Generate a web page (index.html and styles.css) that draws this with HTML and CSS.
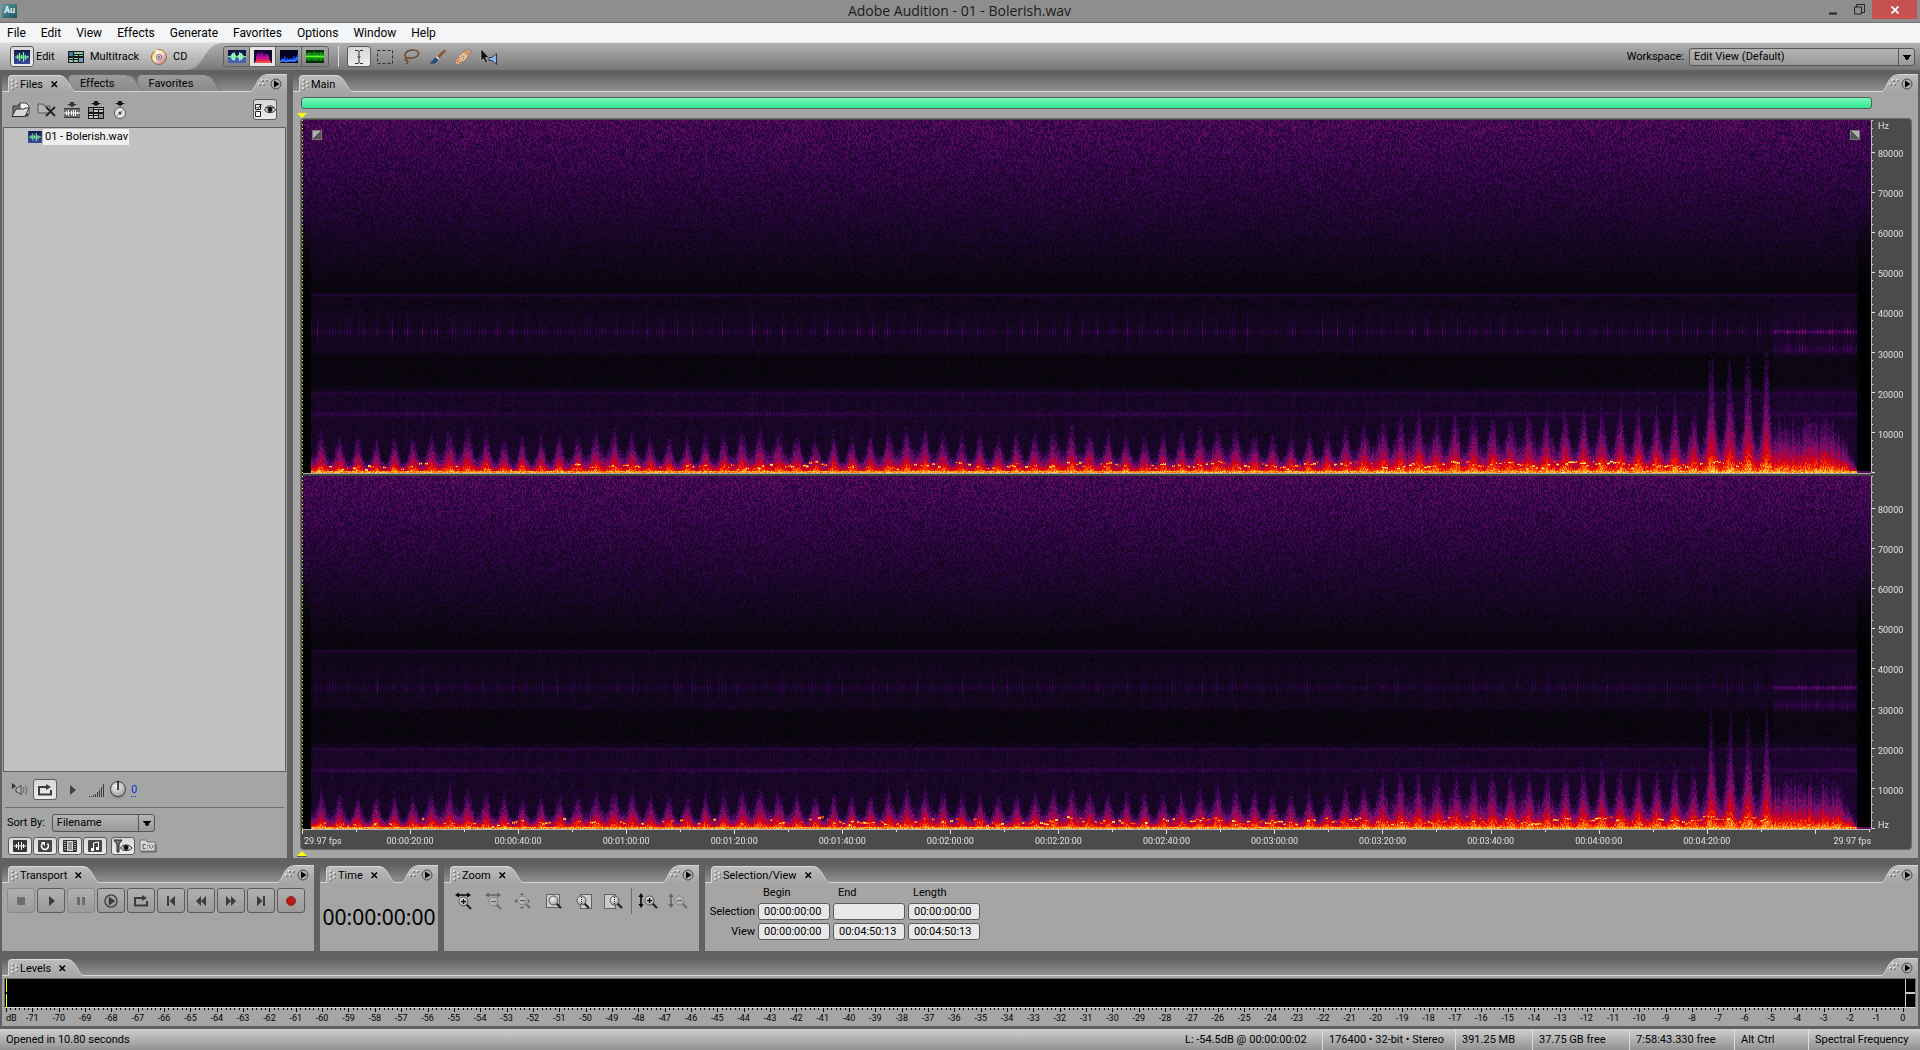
FILE: index.html
```
<!DOCTYPE html>
<html lang="en">
<head>
    <meta charset="UTF-8">
    <meta name="viewport" content="width=device-width, initial-scale=1.0">
    <title>Adobe Audition - 01 - Bolerish.wav</title>
    <link rel="stylesheet" href="styles.css">
</head>
<body>
    <!-- icon sprite -->
    <svg class="sprite" width="0" height="0" aria-hidden="true">
        <defs>
            <linearGradient id="g-tab" x1="0" y1="0" x2="0" y2="1">
                <stop offset="0" stop-color="#bcbcbc"/>
                <stop offset="1" stop-color="#a5a5a5"/>
            </linearGradient>
            <linearGradient id="g-tab-off" x1="0" y1="0" x2="0" y2="1">
                <stop offset="0" stop-color="#9b9b9b"/>
                <stop offset="1" stop-color="#8a8a8a"/>
            </linearGradient>
            <linearGradient id="g-modes" x1="0" y1="0" x2="0" y2="1">
                <stop offset="0" stop-color="#dadada"/>
                <stop offset="1" stop-color="#a0a0a0"/>
            </linearGradient>
            <linearGradient id="g-navy" x1="0" y1="0" x2="0" y2="1">
                <stop offset="0" stop-color="#151a4c"/>
                <stop offset="1" stop-color="#3a4a9c"/>
            </linearGradient>
            <linearGradient id="g-flame" x1="0" y1="0" x2="0" y2="1">
                <stop offset="0" stop-color="#3a0a8a"/>
                <stop offset=".6" stop-color="#c0109a"/>
                <stop offset="1" stop-color="#ff3020"/>
            </linearGradient>
            <linearGradient id="g-cd" x1="0" y1="0" x2="1" y2="1">
                <stop offset="0" stop-color="#f2a23a"/>
                <stop offset=".4" stop-color="#fff2c0"/>
                <stop offset=".6" stop-color="#e8b8d8"/>
                <stop offset="1" stop-color="#b07a30"/>
            </linearGradient>
            <radialGradient id="g-lens" cx=".4" cy=".35" r=".7">
                <stop offset="0" stop-color="#f4f4f4"/>
                <stop offset="1" stop-color="#9c9c9c"/>
            </radialGradient>
        </defs>
        <symbol id="tab-end" viewBox="0 0 18 17">
            <path d="M0 0C6 0 8 4 11 9C14 14 15 16 18 17H0Z" fill="url(#g-tab)"/>
            <path d="M0 .5C6 .5 8 4 11 9C14 14 15 16.500 18 16.500" fill="none" stroke="#d6d6d6"/>
        </symbol>
        <symbol id="tab-end-off" viewBox="0 0 18 17">
            <path d="M0 0C6 0 8 4 11 9C14 14 15 16 18 17H0Z" fill="url(#g-tab-off)"/>
            <path d="M0 .5C6 .5 8 4.500 11 9.500C14 14 15 16 18 16.500" fill="none" stroke="#6c6c6c"/>
            <path d="M0 16.500H18" stroke="#d6d6d6"/>
        </symbol>
        <symbol id="menu-end" viewBox="0 0 36 18">
            <path d="M0 18C5 16 5 1 17 1H36V18Z" fill="url(#g-tab)"/>
            <path d="M0 17.500C5 16 5 .5 17 .5H36" fill="none" stroke="#d6d6d6"/>
            <path d="M7 9h2v2h-2zM11 9h2v2h-2zM10 5h2v2h-2zM14 5h2v2h-2z" fill="#e4e4e4"/>
            <path d="M8 10h2v2h-2zM12 10h2v2h-2zM11 6h2v2h-2zM15 6h2v2h-2z" fill="#858585"/>
            <circle cx="25" cy="10" r="5" fill="#adadad" stroke="#4c4c4c"/>
            <path d="M23 6.500L28.500 10L23 13.500Z" fill="#000"/>
        </symbol>
        <symbol id="grip" viewBox="0 0 8 12">
            <path d="M1 1h2v2h-2zM1 5h2v2h-2zM1 9h2v2h-2zM5 3h2v2h-2zM5 7h2v2h-2z" fill="#808080"/>
            <path d="M0 0h2v2h-2zM0 4h2v2h-2zM0 8h2v2h-2zM4 2h2v2h-2zM4 6h2v2h-2z" fill="#d8d8d8"/>
        </symbol>
        <symbol id="modes-end" viewBox="0 0 36 27">
            <path d="M0 0H36C23 1 20 10 14 18C10 24 7 26 0 27Z" fill="url(#g-modes)"/>
        </symbol>
        <symbol id="wave" viewBox="0 0 16 14">
            <rect width="16" height="14" fill="url(#g-navy)"/>
            <path d="M1 7h14" stroke="#6fe08c"/>
            <path d="M3.500 5v4M5.500 3v8M7.500 5v4M9.500 2v10M11.500 5v5M13.500 6v2" stroke="#7df09a" stroke-width="1.300"/>
        </symbol>
        <symbol id="wave2" viewBox="0 0 18 13">
            <rect width="18" height="13" fill="#11154a"/>
            <rect y="7" width="18" height="6" fill="#4a5fb0"/>
            <path d="M0 6.500h18" stroke="#7df0a0"/>
            <path d="M1.500 6.500L5.500 2.500L9 6.500L12.500 2.500L16.500 6.500L12.500 10.500L9 6.500L5.500 10.500Z" fill="#7df0a0"/>
            <path d="M4.500 3v7M6.500 2v9M11.500 2v9M13.500 3v7" stroke="#b8ffd0" stroke-opacity=".7"/>
        </symbol>
        <symbol id="spectral" viewBox="0 0 18 13">
            <rect width="18" height="13" fill="#10062c"/>
            <path d="M2 12V6L4 2L6 4L7 1L9 3L10 6L12 3L15 6L16 12Z" fill="url(#g-flame)"/>
            <path d="M1 12h16" stroke="#ff4a50" stroke-width="2"/>
        </symbol>
        <symbol id="pan" viewBox="0 0 18 13">
            <rect width="18" height="13" fill="#020420"/>
            <path d="M0 11l2-3 2 1V5l2 4 2-1 1 2 2-2 2 1V5l2 3 3-4v6l-2 2H0Z" fill="#1848e8"/>
            <path d="M0 12l3-2 3 2 4-2 4 1 4-3" fill="none" stroke="#4aa8ff"/>
        </symbol>
        <symbol id="phase" viewBox="0 0 18 13">
            <rect width="18" height="13" fill="#032a05"/>
            <path d="M0 4h18M0 9h18" stroke="#0b7a12" stroke-width="3"/>
            <path d="M0 6.500h18" stroke="#5cff2a" stroke-width="2"/>
            <path d="M3 2v9M8 1v10M11 3v8M15 2v9" stroke="#2bd01e" stroke-opacity=".6"/>
        </symbol>
        <symbol id="multi" viewBox="0 0 16 12">
            <rect width="16" height="12" fill="#15181c"/>
            <path d="M1 1h4v4h-4z" fill="#4a7aa8"/>
            <path d="M11 7h4v4h-4z" fill="#78a0c8"/>
            <path d="M6 1h9v2h-9zM6 4h4v1h-4zM11 4h4v1h-4zM1 7h4v1h-4zM1 9h4v2h-4zM6 7h4v1h-4zM6 9h4v2h-4z" fill="#8ec8a0"/>
        </symbol>
        <symbol id="cd" viewBox="0 0 16 16">
            <circle cx="8" cy="8" r="7.500" fill="url(#g-cd)" stroke="#9a6a30"/>
            <path d="M8 8L3 1.500A8 8 0 0 1 8 .5Z" fill="#fff" opacity=".7"/>
            <circle cx="8" cy="8" r="2.500" fill="#e8e0e8" stroke="#806070"/>
            <circle cx="8" cy="8" r="1" fill="#666"/>
        </symbol>
        <symbol id="ibeam" viewBox="0 0 12 16">
            <path d="M2 1.500h3l1 1 1-1h3M6 2.500v11M2 14.500h3l1-1 1 1h3M4.500 8h3" fill="none" stroke="#303030"/>
        </symbol>
        <symbol id="marquee" viewBox="0 0 16 14">
            <rect x=".5" y=".5" width="15" height="13" fill="none" stroke="#26303a" stroke-dasharray="3 2"/>
        </symbol>
        <symbol id="lasso" viewBox="0 0 18 16">
            <path d="M5 9C2 8 2 4 6 2C10 0 16 1 16.500 4C17 8 10 10 5.500 9C3 8.500 2.500 11 5 11.500C7 12 5 14 4 15" fill="none" stroke="#6a4a2c" stroke-width="1.500"/>
        </symbol>
        <symbol id="brush" viewBox="0 0 17 16">
            <path d="M15.500 0.500L8 7.500L10 9.500L17 2Z" fill="#8a5030"/>
            <path d="M8 7L10.500 9.500L9 11L6.500 8.500Z" fill="#d8d8d8"/>
            <path d="M7 8.500C4 9 4 13 0 14C4 15.500 9 14.500 9 10.500Z" fill="#284c78"/>
        </symbol>
        <symbol id="heal" viewBox="0 0 18 18">
            <g transform="rotate(-45 9 9)">
                <rect x="-1" y="6" width="20" height="6" rx="3" fill="#d8a880" stroke="#9a6a48" stroke-width=".7"/>
                <rect x="6" y="6" width="6" height="6" fill="#ecc8a4"/>
                <path d="M2 8h1M2 10.500h1M7.500 8h1M9.500 9h1M7.500 10.500h1M15 8h1M15 10.500h1" stroke="#7a4a2c"/>
            </g>
        </symbol>
        <symbol id="scrub" viewBox="0 0 18 16">
            <path d="M1 0L9 8.500L5.500 8.500L7.500 13L5.500 14L3.500 9.500L1 12Z" fill="#111" stroke="#d0d0d0" stroke-width=".5"/>
            <path d="M9 8.500h3l4.500-4v11L12 11.500H9Z" fill="#8fb8dc" stroke="#1f3a58"/>
        </symbol>
        <symbol id="folder-open" viewBox="0 0 20 16">
            <path d="M2 14V4h5l1-2h3v3h6v9Z" fill="#787878" stroke="#303030"/>
            <path d="M9 1h6l3 3v8h-9Z" fill="#f4f4f4" stroke="#404040"/>
            <path d="M1 14.500L5 7h8l1-1h4l-4 8.500Z" fill="#d8d8d8" stroke="#303030"/>
        </symbol>
        <symbol id="folder-close" viewBox="0 0 20 16">
            <path d="M1 11V2h5l1 2h6v7Z" fill="#b4b4b4" stroke="#5a5a5a"/>
            <path d="M9 5L18 14M18 5L9 14" stroke="#222" stroke-width="1.800"/>
        </symbol>
        <symbol id="ins-wave" viewBox="0 0 18 18">
            <path d="M7 1h4v2h3L9 6L4 3h3Z" fill="#333"/>
            <rect x="1" y="7" width="16" height="10" fill="#6a6a6a"/>
            <path d="M1 7.500h16M1 16.500h16" stroke="#3a3a3a"/>
            <path d="M1 12h16M3.500 10v4M5.500 9v6M8.500 10v4M10.500 9v6M12.500 9v6M14.500 11v2" stroke="#fff"/>
        </symbol>
        <symbol id="ins-multi" viewBox="0 0 18 18">
            <path d="M7 0h4v2h3L9 5L4 2h3Z" fill="#111"/>
            <rect x="1" y="6" width="16" height="12" fill="#151515"/>
            <path d="M2 7h4v4h-4zM12 13h4v4h-4z" fill="#8c8c8c"/>
            <path d="M7 7h9v1h-9zM7 9h4v2h-4zM12 9h4v2h-4zM2 13h4v1h-4zM2 15h4v2h-4zM7 13h4v1h-4zM7 15h4v2h-4z" fill="#c8c8c8"/>
        </symbol>
        <symbol id="ins-cd" viewBox="0 0 18 18">
            <path d="M7 0h4v2h3L9 5L4 2h3Z" fill="#111"/>
            <circle cx="9" cy="12" r="5.500" fill="#e4e4e4" stroke="#555"/>
            <path d="M9 12L13 8M9 12L5 16" stroke="#888"/>
            <circle cx="9" cy="12" r="1.500" fill="#444"/>
        </symbol>
        <symbol id="eye" viewBox="0 0 12 9">
            <path d="M.5 5C3 1 9 1 11.500 5C9 8.500 3 8.500 .5 5Z" fill="#eee" stroke="#222"/>
            <circle cx="6" cy="4.500" r="2.500" fill="#111"/>
            <path d="M1 3C4 0 8 0 11 3" fill="none" stroke="#555"/>
        </symbol>
        <symbol id="checks" viewBox="0 0 8 14">
            <path d="M1.500 1.500h5v5h-5zM1.500 8.500h5v5h-5z" fill="#fff" stroke="#222"/>
            <path d="M2.500 4l1.500 1.500L7.500 1" fill="none" stroke="#000"/>
        </symbol>
        <symbol id="autoplay" viewBox="0 0 18 14">
            <path d="M1 0v6l4-3Z" fill="#333"/>
            <path d="M5 5h2l3-3v10L7 9H5Z" fill="#b8b8b8" stroke="#444"/>
            <path d="M12 4q2 3 0 6M14.500 2.500q3 4.500 0 9" fill="none" stroke="#666"/>
        </symbol>
        <symbol id="loop" viewBox="0 0 16 12">
            <path d="M4 3H2V10.500H14V6" fill="none" stroke="#3c3c3c" stroke-width="2"/>
            <path d="M4 3h6" stroke="#3c3c3c" stroke-width="2"/>
            <path d="M9 0L14 3L9 6Z" fill="#3c3c3c"/>
        </symbol>
        <symbol id="play" viewBox="0 0 6 10"><path d="M0 0L6 5L0 10Z" fill="#404040"/></symbol>
        <symbol id="volume" viewBox="0 0 16 14">
            <path d="M.5 13v1M2.500 13v1M4.500 12v2M6.500 11v3M8.500 9v5M10.500 7v7M12.500 4v10M14.500 1v13" stroke="#3c3c3c"/>
        </symbol>
        <symbol id="knob" viewBox="0 0 18 20">
            <circle cx="9" cy="11" r="8" fill="#777" opacity=".5"/>
            <circle cx="9" cy="9" r="7.500" fill="url(#g-lens)" stroke="#444"/>
            <path d="M9 1v9" stroke="#111" stroke-width="1.500"/>
        </symbol>
        <symbol id="f-wave" viewBox="0 0 14 12">
            <rect width="14" height="12" rx="1" fill="#333"/>
            <path d="M1 6h12M3.500 4v4M5.500 2v8M8.500 2v8M10.500 4v4" stroke="#fff"/>
        </symbol>
        <symbol id="f-loop" viewBox="0 0 14 12">
            <rect width="14" height="12" rx="1" fill="#444"/>
            <path d="M5 3A3.500 3.500 0 1 0 9.500 3.500" fill="none" stroke="#fff" stroke-width="1.500"/>
            <path d="M3 2h4v4Z" fill="#fff"/>
        </symbol>
        <symbol id="f-video" viewBox="0 0 14 12">
            <rect width="14" height="12" rx="1" fill="#333"/>
            <rect x="4.500" y="1.500" width="5" height="9" fill="#999" stroke="#ddd"/>
            <path d="M2 1v10M12 1v10" stroke="#fff" stroke-dasharray="1 1"/>
        </symbol>
        <symbol id="f-midi" viewBox="0 0 14 12">
            <rect width="14" height="12" rx="1" fill="#444"/>
            <path d="M5.500 9V3L10.500 2V8" fill="none" stroke="#fff"/>
            <path d="M3 8h3v3h-3zM8 7h3v3h-3z" fill="#fff"/>
        </symbol>
        <symbol id="f-filter" viewBox="0 0 20 15">
            <path d="M1 1h8L6 5v8H4V5Z" fill="#777" stroke="#222"/>
            <path d="M7.500 9C10 5 16 5 19 9C16 12.500 10 12.500 7.500 9Z" fill="#ddd" stroke="#222"/>
            <circle cx="13" cy="8.500" r="2.500" fill="#111"/>
        </symbol>
        <symbol id="f-path" viewBox="0 0 18 14">
            <path d="M1 12V1h6l1 2h8v9Z" fill="#d8d8d8" stroke="#777"/>
            <path d="M2 13h15V5" fill="none" stroke="#555"/>
            <path d="M6.500 5.500h-2.500v4h2.500M8.500 6v1M8.500 8.500v1M10 5.500l1.500 4M12.500 5.500l2 2-2 2" fill="none" stroke="#555"/>
        </symbol>
        <symbol id="t-stop" viewBox="0 0 16 12"><path d="M4 2h8v8H4Z" fill="#6c6c6c"/></symbol>
        <symbol id="t-play" viewBox="0 0 16 12"><path d="M6 1L12 6L6 11Z" fill="#3c3c3c"/></symbol>
        <symbol id="t-pause" viewBox="0 0 16 12"><path d="M4 2h3v8H4ZM9 2h3v8H9Z" fill="#6c6c6c"/></symbol>
        <symbol id="t-playend" viewBox="0 0 16 12">
            <circle cx="8" cy="6" r="5.400" fill="none" stroke="#3c3c3c" stroke-width="1.200"/>
            <path d="M6 2L12 6L6 10Z" fill="#3c3c3c"/>
        </symbol>
        <symbol id="t-start" viewBox="0 0 16 12"><path d="M4 1h2v10H4ZM12 1v10L6.500 6Z" fill="#3c3c3c"/></symbol>
        <symbol id="t-rew" viewBox="0 0 16 12"><path d="M8 1v10L3 6ZM13 1v10L8 6Z" fill="#3c3c3c"/></symbol>
        <symbol id="t-ff" viewBox="0 0 16 12"><path d="M3 1L8 6L3 11ZM8 1L13 6L8 11Z" fill="#3c3c3c"/></symbol>
        <symbol id="t-end" viewBox="0 0 16 12"><path d="M4 1L9.500 6L4 11ZM10 1h2v10h-2Z" fill="#3c3c3c"/></symbol>
        <symbol id="t-rec" viewBox="0 0 16 12"><circle cx="8" cy="6" r="4.500" fill="#c01818" stroke="#7c3030"/></symbol>
        <symbol id="lens" viewBox="0 0 14 14">
            <path d="M8.500 8.500L13 13" stroke="#222" stroke-width="2.200"/>
            <circle cx="5.500" cy="5.500" r="4.500" fill="url(#g-lens)" stroke="#555"/>
        </symbol>
        <symbol id="z-in-h" viewBox="0 0 20 18">
            <path d="M3 3h12" stroke="#000" stroke-width="1.500"/><path d="M1 3l4-2.500v5ZM17 3l-4-2.500v5Z" fill="#000"/>
            <use href="#lens" x="4" y="4" width="14" height="14"/>
            <path d="M7 9.500h5M9.500 7v5" stroke="#000" stroke-width="1.300"/>
        </symbol>
        <symbol id="z-out-h" viewBox="0 0 20 18">
            <path d="M3 3h12" stroke="#000" stroke-width="1.500"/><path d="M1 3l4-2.500v5ZM17 3l-4-2.500v5Z" fill="#000"/>
            <use href="#lens" x="4" y="4" width="14" height="14"/>
            <path d="M7 9.500h5" stroke="#000" stroke-width="1.300"/>
        </symbol>
        <symbol id="z-full" viewBox="0 0 20 18">
            <path d="M0 9l3-2v4ZM16 9l-2-2v4ZM8 1l2 2h-4ZM8 17l2-2h-4Z" fill="#000"/>
            <use href="#lens" x="3" y="3" width="14" height="14"/>
            <path d="M6 8.500h5" stroke="#000" stroke-width="1.300"/>
        </symbol>
        <symbol id="z-sel" viewBox="0 0 20 18">
            <rect x="2.500" y="2.500" width="13" height="13" fill="#ccc" stroke="#111" stroke-dasharray="1 1"/>
            <use href="#lens" x="4" y="3" width="14" height="14"/>
        </symbol>
        <symbol id="z-left" viewBox="0 0 20 18">
            <rect x="6.500" y="2.500" width="11" height="14" fill="#ccc" stroke="#111" stroke-dasharray="1 1"/>
            <use href="#lens" x="2" y="3" width="14" height="14"/>
            <path d="M7.500 5v7" stroke="#111" stroke-dasharray="1 1"/>
        </symbol>
        <symbol id="z-right" viewBox="0 0 20 18">
            <rect x=".5" y="2.500" width="11" height="14" fill="#ccc" stroke="#111" stroke-dasharray="1 1"/>
            <use href="#lens" x="5" y="3" width="14" height="14"/>
            <path d="M10.500 5v7" stroke="#111" stroke-dasharray="1 1"/>
        </symbol>
        <symbol id="z-in-v" viewBox="0 0 20 18">
            <path d="M3 3v11" stroke="#000" stroke-width="1.500"/><path d="M3 1l-2.500 4h5ZM3 16l-2.500-4h5Z" fill="#000"/>
            <use href="#lens" x="6" y="3" width="14" height="14"/>
            <path d="M9 8.500h5M11.500 6v5" stroke="#000" stroke-width="1.300"/>
        </symbol>
        <symbol id="z-out-v" viewBox="0 0 20 18">
            <path d="M3 3v11" stroke="#000" stroke-width="1.500"/><path d="M3 1l-2.500 4h5ZM3 16l-2.500-4h5Z" fill="#000"/>
            <use href="#lens" x="6" y="3" width="14" height="14"/>
            <path d="M9 8.500h5" stroke="#000" stroke-width="1.300"/>
        </symbol>
        <symbol id="x" viewBox="0 0 7 7"><path d="M.5 .5L6 6M6 .5L.5 6" stroke="#000" stroke-width="1.500"/></symbol>
    </svg>

    <header class="titlebar">
        <span class="app-icon">Au</span>
        <h1>Adobe Audition - 01 - Bolerish.wav</h1>
        <div class="window-buttons">
            <button aria-label="Minimize"><svg width="9" height="10"><path d="M0 8.500h8" stroke="#222" stroke-width="2"/></svg></button>
            <button aria-label="Restore"><svg width="11" height="11"><path d="M.5 3h7v7h-7zM2.500 3V.5h8v8H8" fill="none" stroke="#222"/></svg></button>
            <button class="close" aria-label="Close"><svg width="8" height="8"><path d="M.5 .5l7 7M7.500 .5l-7 7" stroke="#fff" stroke-width="1.700"/></svg></button>
        </div>
    </header>

    <nav class="menubar">
        <a href="#">File</a>
        <a href="#">Edit</a>
        <a href="#">View</a>
        <a href="#">Effects</a>
        <a href="#">Generate</a>
        <a href="#">Favorites</a>
        <a href="#">Options</a>
        <a href="#">Window</a>
        <a href="#">Help</a>
    </nav>

    <div class="toolbar">
        <div class="modes">
            <button class="tool on" aria-label="Edit view"><svg width="16" height="14"><use href="#wave"/></svg></button>
            <span class="mode-name">Edit</span>
            <button class="mode multi"><svg width="16" height="12"><use href="#multi"/></svg>Multitrack</button>
            <button class="mode"><svg width="16" height="16"><use href="#cd"/></svg>CD</button>
        </div>
        <svg class="modes-end" width="36" height="27"><use href="#modes-end"/></svg>
        <div class="views">
            <button aria-label="Waveform"><svg width="18" height="13"><use href="#wave2"/></svg></button>
            <button class="on" aria-label="Spectral frequency"><svg width="18" height="13"><use href="#spectral"/></svg></button>
            <button aria-label="Spectral pan"><svg width="18" height="13"><use href="#pan"/></svg></button>
            <button aria-label="Spectral phase"><svg width="18" height="13"><use href="#phase"/></svg></button>
        </div>
        <div class="tools">
            <button class="tool on" aria-label="Time selection"><svg width="12" height="16"><use href="#ibeam"/></svg></button>
            <button class="tool" aria-label="Marquee"><svg width="16" height="14"><use href="#marquee"/></svg></button>
            <button class="tool" aria-label="Lasso"><svg width="18" height="16"><use href="#lasso"/></svg></button>
            <button class="tool" aria-label="Brush"><svg width="17" height="16"><use href="#brush"/></svg></button>
            <button class="tool" aria-label="Spot healing"><svg width="18" height="18"><use href="#heal"/></svg></button>
            <button class="tool" aria-label="Scrub"><svg width="18" height="16"><use href="#scrub"/></svg></button>
        </div>
        <label class="workspace" for="workspace">Workspace:</label>
        <select id="workspace" class="drop workspace-drop"><option>Edit View (Default)</option></select>
    </div>

    <main class="dock">
        <section class="panel files">
            <div class="strip">
                <div class="tab"><svg width="8" height="12"><use href="#grip"/></svg><span>Files</span><button class="tab-x" aria-label="Close Files"><svg width="7" height="7"><use href="#x"/></svg></button></div>
                <svg class="tab-end" width="18" height="17"><use href="#tab-end"/></svg>
                <div class="tab off">Effects</div>
                <svg class="tab-end" width="18" height="17"><use href="#tab-end-off"/></svg>
                <div class="tab off">Favorites</div>
                <svg class="tab-end" width="18" height="17"><use href="#tab-end-off"/></svg>
                <div class="strip-fill"></div>
                <button class="panel-menu" aria-label="Panel menu"><svg width="36" height="18"><use href="#menu-end"/></svg></button>
            </div>
            <div class="file-tools">
                <button aria-label="Import file"><svg width="20" height="16"><use href="#folder-open"/></svg></button>
                <button aria-label="Close file"><svg width="20" height="16"><use href="#folder-close"/></svg></button>
                <button aria-label="Edit file"><svg width="18" height="18"><use href="#ins-wave"/></svg></button>
                <button aria-label="Insert into multitrack"><svg width="18" height="18"><use href="#ins-multi"/></svg></button>
                <button aria-label="Insert into CD"><svg width="18" height="18"><use href="#ins-cd"/></svg></button>
                <button class="tool on options" aria-label="Show options"><svg width="8" height="14"><use href="#checks"/></svg><svg width="12" height="9"><use href="#eye"/></svg></button>
            </div>
            <ul class="file-list">
                <li><svg width="14" height="12"><use href="#wave"/></svg><span>01 - Bolerish.wav</span></li>
            </ul>
            <div class="preview">
                <button aria-label="Auto-play"><svg width="18" height="14"><use href="#autoplay"/></svg></button>
                <button class="tool on" aria-label="Loop"><svg width="16" height="12"><use href="#loop"/></svg></button>
                <button class="preview-play" aria-label="Play"><svg width="6" height="10"><use href="#play"/></svg></button>
                <svg width="16" height="14"><use href="#volume"/></svg>
                <svg width="18" height="20"><use href="#knob"/></svg>
                <a class="level" href="#">0</a>
            </div>
            <div class="sort">
                <label for="sort">Sort By:</label>
                <select id="sort" class="drop"><option>Filename</option></select>
            </div>
            <div class="filters">
                <button class="tool on" aria-label="Show audio"><svg width="14" height="12"><use href="#f-wave"/></svg></button>
                <button class="tool on" aria-label="Show loops"><svg width="14" height="12"><use href="#f-loop"/></svg></button>
                <button class="tool on" aria-label="Show video"><svg width="14" height="12"><use href="#f-video"/></svg></button>
                <button class="tool on" aria-label="Show MIDI"><svg width="14" height="12"><use href="#f-midi"/></svg></button>
                <button class="tool on filter" aria-label="Show markers"><svg width="20" height="15"><use href="#f-filter"/></svg></button>
                <button class="tool" aria-label="Full paths"><svg width="18" height="14"><use href="#f-path"/></svg></button>
            </div>
        </section>

        <section class="panel main-view">
            <div class="strip">
                <div class="tab"><svg width="8" height="12"><use href="#grip"/></svg><span>Main</span></div>
                <svg class="tab-end" width="18" height="17"><use href="#tab-end"/></svg>
                <div class="strip-fill"></div>
                <button class="panel-menu" aria-label="Panel menu"><svg width="36" height="18"><use href="#menu-end"/></svg></button>
            </div>
            <div class="main-body">
                <div class="range"><div class="range-bar"></div></div>
                <div class="display">
                    <div class="channel">
                        <canvas class="spectro" data-seed="7" data-gain="1"></canvas>
                        <span class="corner left"></span>
                        <span class="corner right"></span>
                    </div>
                    <div class="hz">
                        <canvas class="ticks" data-kind="hz"></canvas>
                        <ol class="hz-labels">
                            <li class="top">Hz</li>
                            <li>80000</li><li>70000</li><li>60000</li><li>50000</li>
                            <li>40000</li><li>30000</li><li>20000</li><li>10000</li>
                            <li class="bottom"></li>
                        </ol>
                    </div>
                    <div class="split"></div>
                    <div class="split-hz"></div>
                    <div class="channel">
                        <canvas class="spectro" data-seed="41" data-gain="0.7"></canvas>
                    </div>
                    <div class="hz">
                        <canvas class="ticks" data-kind="hz"></canvas>
                        <ol class="hz-labels">
                            <li class="top"></li>
                            <li>80000</li><li>70000</li><li>60000</li><li>50000</li>
                            <li>40000</li><li>30000</li><li>20000</li><li>10000</li>
                            <li class="bottom">Hz</li>
                        </ol>
                    </div>
                    <div class="time-ruler">
                        <canvas class="ticks" data-kind="time"></canvas>
                        <ol class="time-labels">
                            <li class="first">29.97 fps</li>
                            <li>00:00:20:00</li><li>00:00:40:00</li><li>00:01:00:00</li>
                            <li>00:01:20:00</li><li>00:01:40:00</li><li>00:02:00:00</li>
                            <li>00:02:20:00</li><li>00:02:40:00</li><li>00:03:00:00</li>
                            <li>00:03:20:00</li><li>00:03:40:00</li><li>00:04:00:00</li>
                            <li>00:04:20:00</li>
                            <li class="last">29.97 fps</li>
                        </ol>
                    </div>
                    <svg class="marker start" width="10" height="6"><path d="M0 0h10L5 5Z" fill="#ff0"/></svg>
                    <svg class="marker end" width="10" height="6"><path d="M0 5h10L5 0Z" fill="#ff0"/><path d="M0 5.500h10" stroke="#555"/></svg>
                    <div class="playhead"></div>
                </div>
            </div>
        </section>
    </main>

    <div class="dock-row">
        <section class="panel transport">
            <div class="strip">
                <div class="tab"><svg width="8" height="12"><use href="#grip"/></svg><span>Transport</span><button class="tab-x" aria-label="Close Transport"><svg width="7" height="7"><use href="#x"/></svg></button></div>
                <svg class="tab-end" width="18" height="17"><use href="#tab-end"/></svg>
                <div class="strip-fill"></div>
                <button class="panel-menu" aria-label="Panel menu"><svg width="36" height="18"><use href="#menu-end"/></svg></button>
            </div>
            <div class="transport-body">
                <button disabled aria-label="Stop"><svg width="16" height="12"><use href="#t-stop"/></svg></button>
                <button aria-label="Play"><svg width="16" height="12"><use href="#t-play"/></svg></button>
                <button disabled aria-label="Pause"><svg width="16" height="12"><use href="#t-pause"/></svg></button>
                <button aria-label="Play to end"><svg width="18" height="14"><use href="#t-playend"/></svg></button>
                <button aria-label="Play looped"><svg width="16" height="12"><use href="#loop"/></svg></button>
                <button aria-label="Go to beginning"><svg width="16" height="12"><use href="#t-start"/></svg></button>
                <button aria-label="Rewind"><svg width="16" height="12"><use href="#t-rew"/></svg></button>
                <button aria-label="Fast forward"><svg width="16" height="12"><use href="#t-ff"/></svg></button>
                <button aria-label="Go to end"><svg width="16" height="12"><use href="#t-end"/></svg></button>
                <button aria-label="Record"><svg width="16" height="12"><use href="#t-rec"/></svg></button>
            </div>
        </section>

        <section class="panel time">
            <div class="strip">
                <div class="tab"><svg width="8" height="12"><use href="#grip"/></svg><span>Time</span><button class="tab-x" aria-label="Close Time"><svg width="7" height="7"><use href="#x"/></svg></button></div>
                <svg class="tab-end" width="18" height="17"><use href="#tab-end"/></svg>
                <div class="strip-fill"></div>
                <button class="panel-menu" aria-label="Panel menu"><svg width="36" height="18"><use href="#menu-end"/></svg></button>
            </div>
            <div class="time-body">00:00:00:00</div>
        </section>

        <section class="panel zoom">
            <div class="strip">
                <div class="tab"><svg width="8" height="12"><use href="#grip"/></svg><span>Zoom</span><button class="tab-x" aria-label="Close Zoom"><svg width="7" height="7"><use href="#x"/></svg></button></div>
                <svg class="tab-end" width="18" height="17"><use href="#tab-end"/></svg>
                <div class="strip-fill"></div>
                <button class="panel-menu" aria-label="Panel menu"><svg width="36" height="18"><use href="#menu-end"/></svg></button>
            </div>
            <div class="zoom-body">
                <button aria-label="Zoom in horizontally"><svg width="20" height="18"><use href="#z-in-h"/></svg></button>
                <button disabled aria-label="Zoom out horizontally"><svg width="20" height="18"><use href="#z-out-h"/></svg></button>
                <button disabled aria-label="Zoom out full"><svg width="20" height="18"><use href="#z-full"/></svg></button>
                <button aria-label="Zoom to selection"><svg width="20" height="18"><use href="#z-sel"/></svg></button>
                <button aria-label="Zoom to left edge"><svg width="20" height="18"><use href="#z-left"/></svg></button>
                <button aria-label="Zoom to right edge"><svg width="20" height="18"><use href="#z-right"/></svg></button>
                <span class="sep"></span>
                <button aria-label="Zoom in vertically"><svg width="20" height="18"><use href="#z-in-v"/></svg></button>
                <button disabled aria-label="Zoom out vertically"><svg width="20" height="18"><use href="#z-out-v"/></svg></button>
            </div>
        </section>

        <section class="panel selection">
            <div class="strip">
                <div class="tab"><svg width="8" height="12"><use href="#grip"/></svg><span>Selection/View</span><button class="tab-x" aria-label="Close Selection/View"><svg width="7" height="7"><use href="#x"/></svg></button></div>
                <svg class="tab-end" width="18" height="17"><use href="#tab-end"/></svg>
                <div class="strip-fill"></div>
                <button class="panel-menu" aria-label="Panel menu"><svg width="36" height="18"><use href="#menu-end"/></svg></button>
            </div>
            <div class="selection-body">
                <span></span><span class="head">Begin</span><span class="head">End</span><span class="head">Length</span>
                <label for="sel-begin">Selection</label>
                <input id="sel-begin" type="text" value="00:00:00:00">
                <input type="text" value="" aria-label="Selection end">
                <input type="text" value="00:00:00:00" aria-label="Selection length">
                <label for="view-begin">View</label>
                <input id="view-begin" type="text" value="00:00:00:00">
                <input type="text" value="00:04:50:13" aria-label="View end">
                <input type="text" value="00:04:50:13" aria-label="View length">
            </div>
        </section>
    </div>

    <section class="panel levels">
        <div class="strip">
            <div class="tab"><svg width="8" height="12"><use href="#grip"/></svg><span>Levels</span><button class="tab-x" aria-label="Close Levels"><svg width="7" height="7"><use href="#x"/></svg></button></div>
            <svg class="tab-end" width="18" height="17"><use href="#tab-end"/></svg>
            <div class="strip-fill"></div>
            <button class="panel-menu" aria-label="Panel menu"><svg width="36" height="18"><use href="#menu-end"/></svg></button>
        </div>
        <div class="meter">
            <div class="bars"><i></i><i></i></div>
            <div class="clip"><i></i><i></i></div>
        </div>
        <div class="db">
            <canvas class="ticks" data-kind="db"></canvas>
            <ol class="db-labels" id="db-labels"><li class="unit">dB</li></ol>
        </div>
    </section>

    <footer class="status">
        <span class="msg">Opened in 10.80 seconds</span>
        <span class="s-level">L: -54.5dB @ 00:00:00:02</span>
        <span class="s-format">176400 &bull; 32-bit &bull; Stereo</span>
        <span class="s-size">391.25 MB</span>
        <span class="s-disk">37.75 GB free</span>
        <span class="s-free">7:58:43.330 free</span>
        <span class="s-keys">Alt Ctrl</span>
        <span class="s-mode">Spectral Frequency</span>
    </footer>

    <script src="script.js"></script>
</body>
</html>
```
FILE: styles.css
```
* {
    box-sizing: border-box;
}

body {
    display: flex;
    flex-direction: column;
    height: 100vh;
    margin: 0;
    overflow: hidden;
    background: #616161;
    color: #000;
    font-family: Roboto, "Noto Sans", sans-serif;
    font-size: 11px;
    line-height: 16px;
}

button {
    display: flex;
    align-items: center;
    justify-content: center;
    margin: 0;
    padding: 0;
    border: 0;
    background: none;
    color: inherit;
    font: inherit;
}

svg {
    display: block;
    flex: none;
}

ol,
ul {
    margin: 0;
    padding: 0;
    list-style: none;
}

.sprite {
    position: absolute;
}

/* title bar */
.titlebar {
    display: grid;
    grid-template-columns: 1fr auto 1fr;
    align-items: center;
    height: 23px;
    padding: 0 3px 0 2px;
    background: #8e8e8e;
    border-bottom: 1px solid #70747a;
}

.titlebar h1 {
    margin: 0;
    color: #1a1a1a;
    font-family: "Open Sans", sans-serif;
    font-size: 14px;
    font-weight: 400;
    line-height: 20px;
}

.app-icon {
    width: 15px;
    height: 14px;
    background: linear-gradient(135deg, #5b9aa3, #1f525c);
    color: #e4f4f6;
    font-size: 9px;
    font-weight: 700;
    line-height: 13px;
    text-align: center;
}

.window-buttons {
    display: flex;
    justify-self: end;
    align-self: start;
}

.window-buttons button {
    width: 26px;
    height: 19px;
}

.window-buttons .close {
    width: 45px;
    background: #c75050;
}

/* menu */
.menubar {
    display: flex;
    gap: 15px;
    height: 20px;
    padding: 0 7px;
    background: #f4f5f7;
    border-bottom: 1px solid #e4e6e8;
    font-size: 12px;
    line-height: 21px;
}

.menubar a {
    color: #000;
    text-decoration: none;
}

/* toolbar */
.toolbar {
    display: flex;
    align-items: center;
    height: 27px;
    padding-right: 5px;
    background: linear-gradient(#b0b0b0, #787878);
}

.modes {
    display: flex;
    align-items: center;
    height: 27px;
    padding-left: 10px;
    background: linear-gradient(#dadada, #a0a0a0);
}

.mode-name {
    width: 34px;
    padding-left: 2px;
}

.mode {
    gap: 6px;
}

.mode.multi {
    width: 83px;
    justify-content: flex-start;
}

.tool {
    width: 24px;
    height: 21px;
}

.tool.on {
    background: linear-gradient(#d8d8d8, #ececec);
    border: 1px solid #5c5c5c;
    border-radius: 3px;
}

.views {
    display: flex;
    height: 21px;
    border: 1px solid #606060;
    border-radius: 3px;
}

.views button {
    width: 26px;
    border-right: 1px solid #606060;
}

.views button:last-child {
    border-right: 0;
}

.views .on {
    background: #e4e4e4;
}

.tools {
    display: flex;
    gap: 2px;
    flex: 1;
    margin-left: 9px;
    padding-left: 8px;
    border-left: 1px solid #dcdcdc;
}

.workspace {
    margin-right: 5px;
}

.drop {
    appearance: none;
    height: 18px;
    padding: 0 20px 0 4px;
    border: 1px solid #555;
    border-radius: 3px;
    color: #000;
    font: inherit;
    background:
        linear-gradient(to bottom right, #000 50%, transparent 51%) right 3px top 6px / 4px 6px no-repeat,
        linear-gradient(to bottom left, #000 50%, transparent 51%) right 7px top 6px / 4px 6px no-repeat,
        linear-gradient(#555, #555) right 15px top / 1px 100% no-repeat,
        linear-gradient(#b4b4b4, #9a9a9a);
}

.workspace-drop {
    width: 226px;
}

/* panels */
.dock {
    display: flex;
    flex: 1;
    gap: 6px;
    min-height: 0;
    padding: 4px 2px 0;
}

.dock-row {
    display: flex;
    gap: 6px;
    height: 86px;
    margin-top: 7px;
    padding: 0 2px;
}

.panel {
    display: flex;
    flex-direction: column;
    min-width: 0;
    background: #a5a5a5;
}

.strip {
    display: flex;
    align-items: flex-end;
    flex: none;
    height: 18px;
    background: linear-gradient(#616161, #939393);
}

.strip::before {
    content: "";
    width: 6px;
    border-bottom: 1px solid #d6d6d6;
}

.tab {
    display: flex;
    align-items: center;
    height: 17px;
    padding: 1px 0 0 2px;
    background: linear-gradient(#bcbcbc, #a5a5a5);
    border: solid #d6d6d6;
    border-width: 1px 0 0 1px;
    border-radius: 4px 0 0 0;
    white-space: nowrap;
}

.tab svg + span {
    padding-left: 1px;
}

.tab.off {
    margin-left: -7px;
    padding: 1px 12px 0 11px;
    background: linear-gradient(#9b9b9b, #8a8a8a);
    border: 0;
    border-bottom: 1px solid #d6d6d6;
}

/* the curve lies over the next tab */
.strip .tab-end {
    position: relative;
}

.tab-x {
    padding-left: 8px;
}

.strip-fill {
    flex: 1;
    border-bottom: 1px solid #d6d6d6;
}

/* files */
.files {
    width: 285px;
}

.file-tools {
    display: flex;
    align-items: center;
    gap: 6px;
    height: 35px;
    padding: 0 10px 0 9px;
}

.options {
    gap: 2px;
    margin-left: auto;
}

.file-list {
    flex: 1;
    margin: 0 1px;
    padding-top: 1px;
    background: #c2c2c2;
    border: 1px solid #5f5f5f;
}

.file-list li {
    display: flex;
    align-items: center;
    padding-left: 24px;
}

.file-list span {
    margin-left: 1px;
    padding: 0 1px 0 2px;
    background: #f0f0f0;
}

.preview {
    display: flex;
    align-items: center;
    gap: 4px;
    height: 36px;
    margin: 0 3px;
    padding-left: 6px;
    border-bottom: 1px solid #6c6c6c;
}

.preview-play {
    width: 24px;
}

.level {
    color: #0040d0;
    text-decoration: underline dotted;
    text-underline-offset: 3px;
}

.sort {
    display: flex;
    align-items: center;
    gap: 7px;
    padding: 6px 5px 5px;
}

.sort .drop {
    width: 103px;
}

.filters {
    display: flex;
    gap: 1px;
    padding: 0 6px 3px;
}

.filters .tool {
    height: 18px;
}

.filters .filter {
    margin: 0 0 0 3px;
}

/* main view */
.main-view {
    flex: 1;
}

.main-body {
    display: flex;
    flex-direction: column;
    flex: 1;
    min-height: 0;
    padding: 5px 6px 8px 7px;
}

.range {
    padding: 0 40px 0 1px;
}

.range-bar {
    height: 12px;
    background: linear-gradient(#7af8bc, #30e890);
    border: 1px solid #5a5a5a;
    border-radius: 3px;
}

.display {
    position: relative;
    display: grid;
    grid-template-columns: minmax(0, 1fr) 40px;
    grid-template-rows: minmax(0, 1fr) 3px minmax(0, 1fr) 20px;
    flex: 1;
    min-height: 0;
    margin-top: 9px;
    padding: 1px 0 0 1px;
    background: #4b4b4b;
    border: 1px solid #6c6c6c;
    border-radius: 4px;
    color: #e0e0e0;
    font-size: 9px;
}

.channel {
    position: relative;
    background: #000;
}

.spectro {
    display: block;
    width: 100%;
    height: 100%;
}

.corner {
    position: absolute;
    top: 10px;
    width: 10px;
    height: 10px;
    border: 1px solid #777;
}

.corner.left {
    left: 10px;
    background: linear-gradient(to bottom right, #b0b0b0 50%, #555 50%);
}

.corner.right {
    right: 11px;
    background: linear-gradient(to bottom left, #b0b0b0 50%, #555 50%);
}

.split {
    background: linear-gradient(#aaa 50%, #444 50%);
}

.hz {
    display: flex;
    border-left: 1px solid #b8b8b8;
}

.hz .ticks {
    width: 3px;
    height: 100%;
}

.hz-labels {
    display: flex;
    flex-direction: column;
    margin-bottom: -2px;
    padding: 1px 0 0 3px;
}

.hz-labels li {
    display: flex;
    align-items: center;
    flex: 10000 0 0;
    min-height: 0;
}

.hz-labels .top {
    align-items: flex-start;
    flex-grow: 3200;
    line-height: 10px;
}

.hz-labels .bottom {
    align-items: flex-end;
    flex-grow: 5000;
    line-height: 12px;
}

.time-ruler {
    border-top: 1px solid #b8b8b8;
}

.time-ruler .ticks {
    display: block;
    width: 100%;
    height: 4px;
}

.time-labels {
    display: flex;
    line-height: 14px;
}

.time-labels li {
    flex: 200 0 0;
    min-width: 0;
    text-align: center;
    white-space: nowrap;
}

.time-labels .first {
    flex-grow: 100;
    text-align: left;
    text-indent: 2px;
}

.time-labels .last {
    flex-grow: 204;
    text-align: right;
}

.marker {
    position: absolute;
    left: -4px;
}

.marker.start {
    top: -6px;
}

.marker.end {
    bottom: -8px;
}

.playhead {
    position: absolute;
    top: 1px;
    bottom: 20px;
    left: 1px;
    width: 1px;
    background: repeating-linear-gradient(#ff0 0 1px, #222 1px 4px);
}

/* transport, time, zoom, selection */
.transport {
    width: 312px;
}

.transport-body {
    display: flex;
    gap: 2px;
    padding: 5px;
}

.transport-body button {
    width: 28px;
    height: 25px;
    background: linear-gradient(#b0b0b0, #9a9a9a);
    border: 1px solid #5c5c5c;
    border-radius: 3px;
}

.transport-body button:disabled {
    border-color: #8a8a8a;
}

.time {
    width: 118px;
}

.time-body {
    display: flex;
    flex: 1;
    align-items: center;
    justify-content: center;
    font-family: "Noto Sans", sans-serif;
    font-size: 21px;
}

.zoom {
    width: 255px;
}

.zoom-body {
    display: flex;
    gap: 10px;
    padding: 5px 10px;
}

.zoom-body button {
    width: 20px;
    height: 26px;
}

.zoom-body button:disabled {
    opacity: 0.4;
}

.zoom-body .sep {
    width: 1px;
    margin: 0 -4px 0 -3px;
    background: #6c6c6c;
}

.selection {
    flex: 1;
}

.selection-body {
    display: grid;
    grid-template-columns: 50px repeat(3, 72px);
    column-gap: 3px;
    row-gap: 3px;
    align-items: center;
    padding-top: 3px;
}

.selection-body .head {
    padding-left: 5px;
    line-height: 14px;
}

.selection-body label {
    text-align: right;
    white-space: nowrap;
}

.selection-body input {
    width: 72px;
    height: 17px;
    padding: 0 5px;
    background: #e8e8e8;
    border: 1px solid #5c5c5c;
    border-radius: 3px;
    font: inherit;
}

/* levels */
.levels {
    height: 68px;
    margin: 7px 2px 3px;
}

.meter {
    display: flex;
    height: 30px;
    margin: 2px 2px 0;
    border: 1px solid #6c6c6c;
    border-bottom-color: #d6d6d6;
}

.bars,
.clip {
    display: flex;
    flex-direction: column;
    gap: 2px;
    background: #000;
}

.bars {
    flex: 1;
}

.bars i {
    flex: 1;
    width: 2px;
    border-right: 1px solid #ff0;
}

.clip {
    width: 10px;
    background: #c8c8c8;
    border-left: 1px solid #c8c8c8;
}

.clip i {
    flex: 1;
    background: #000;
}

.db {
    padding: 0 2px 0 4px;
    font-size: 9px;
    line-height: 12px;
}

.db .ticks {
    display: block;
    width: 100%;
    height: 4px;
}

.db-labels {
    display: flex;
}

.db-labels li {
    flex: 2 0 0;
    min-width: 0;
    text-align: center;
}

.db-labels .unit {
    flex-grow: 1;
    text-align: left;
}

/* status bar */
.status {
    display: flex;
    height: 21px;
    background: linear-gradient(#cfcfcf, #929292);
    line-height: 22px;
    white-space: nowrap;
}

.status span {
    padding-left: 6px;
    border-left: 1px solid #dcdcdc;
}

.status .msg {
    flex: 1;
    border-left: 0;
}

.status .s-level {
    width: 143px;
    border-left: 0;
}

.status .s-format {
    width: 133px;
}

.status .s-size {
    width: 77px;
}

.status .s-disk {
    width: 97px;
}

.status .s-free {
    width: 105px;
}

.status .s-keys {
    width: 74px;
}

.status .s-mode {
    width: 112px;
}
```
FILE: script.js
```
const MAX_HZ = 88200;
const DURATION = 290.43;
const BEAT = 3.386;

// colour stops of the spectral palette: level, r, g, b
const PALETTE = [
    [0, 0, 0, 0],
    [0.08, 10, 6, 16],
    [0.2, 38, 5, 60],
    [0.32, 76, 8, 92],
    [0.44, 122, 18, 104],
    [0.54, 176, 0, 72],
    [0.64, 218, 0, 8],
    [0.74, 248, 50, 0],
    [0.84, 255, 135, 16],
    [0.93, 255, 200, 64],
    [1, 255, 240, 130]
];

function color(v) {
    let i = 1;
    while (v > PALETTE[i][0]) i++;
    const a = PALETTE[i - 1];
    const b = PALETTE[i];
    const t = (v - a[0]) / (b[0] - a[0]);
    return [1, 2, 3].map(n => a[n] + (b[n] - a[n]) * t);
}

const LUT = Array.from({ length: 512 }, (_, i) => color(i / 511));

function random(seed) {
    let s = seed;
    return function () {
        s = (s * 1664525 + 1013904223) >>> 0;
        return s / 4294967296;
    };
}

function bump(x, width) {
    return Math.exp(-(x * x) / (width * width));
}

// how high (Hz) the music reaches at second t
function reach(t, hit, wobble) {
    const n = Math.round((t - 3.5) / BEAT);
    const d = bump(t - 3.5 - n * BEAT, 0.8);
    if (t > 272.4) {
        const fade = Math.max(0, (t - 283.5) / 5);
        return Math.max(300, 13500 * (1 - fade) * wobble);
    }
    if (t > 259) return 8500 + 19500 * d * hit;
    if (t > 232) return 6500 + 11000 * d * hit;
    if (t > 198) return 7500 * wobble + 7500 * d * hit;
    return 2400 + t * 6 + 2600 * wobble * bump(Math.sin(t / 9), 0.7) + 6500 * d * hit;
}

function drawSpectrogram(canvas) {
    const w = canvas.width = canvas.clientWidth;
    const h = canvas.height = canvas.clientHeight;
    const gain = Number(canvas.dataset.gain);
    const rnd = random(Number(canvas.dataset.seed));
    const ctx = canvas.getContext("2d");
    const img = ctx.createImageData(w, h);
    let hit = 1;
    let wobble = 1;
    let note = 0;
    let noteHz = 2000;

    for (let x = 0; x < w; x++) {
        const t = x / w * DURATION;
        if (x % 2 === 0) {
            hit = 0.85 + rnd() * 0.3;
            wobble = 0.8 + rnd() * 0.4;
        }
        if (x % 3 === 0) {
            note = rnd() < 0.2 + t / 500 ? 0.7 + rnd() * 0.3 : 0;
            noteHz = 1000 + 800 * Math.sin(t / 4.7) * Math.sin(t / 2.1) + rnd() * 1000 + t * 3;
        }
        const top = reach(t, hit, wobble) * (0.75 + 0.25 * gain);
        const cluster = bump(Math.sin(x * Math.PI / 15), 0.6);
        const stripe = (x % 3 === 0 ? 1 : 0.25) * (0.3 + rnd() * 0.7) * (0.25 + 0.75 * cluster);
        const end = t > 287.8;
        const silent = t < 1.5 || end;
        const tail = t > 272.4 && !silent;
        let grain = 0;

        for (let y = 0; y < h; y++) {
            const f = (h - y) / h * MAX_HZ;
            if (y % 2 === 0 || rnd() > 0.6) grain = rnd() - 0.5;
            let v;
            if (f > 45000) {
                const k = (f - 45000) / 43200;
                v = 0.065 + 0.225 * k + grain * (0.05 + 0.19 * k);
                if (silent) v *= Math.min(1, 0.25 + k * 1.6);
            } else if (silent) {
                v = end ? 0.05 * Math.max(0, 1 - (t - 287.8)) + grain * 0.03 : 0;
                if (end && f < 500) v += 0.35;
            } else {
                v = 0.105 + grain * 0.07;
                if (f < 29500 && f > 21500) v = 0.07 + grain * 0.06;
                if (f < 20500) v = 0.13 + grain * 0.09 + stripe * 0.05;
                if (f > 30500 && f < 41000) v += stripe * 0.14 * bump(f - 36000, 4500) * gain;
                v += 0.06 * bump(f - 44500, 400);
                v += (0.02 + stripe * 0.16 * gain) * bump(f - 35400, 700);
                v += 0.02 * bump(f - 30800, 300);
                v += 0.06 * bump(f - 20000, 280);
                v += (0.07 + 0.03 * Math.sin(t / 11)) * bump(f - 14800, 550);
                if (tail) {
                    v += 0.02 + (0.12 + stripe * 0.12) * bump(f - 35400, 450);
                    v += (0.04 + stripe * 0.2 * gain) * bump(f - 31000, 1200);
                }
                let music = 1.02 - 0.86 * Math.pow(f / top, 0.5);
                if (f < 700) music = Math.max(music, 0.86);
                const speck = f < 4500 ? grain * 0.2 : grain * 0.18;
                v = Math.max(v, music + speck);
                if (note && t < 272) v = Math.max(v, (note + grain * 0.3) * bump(f - noteHz, 450));
            }
            const c = LUT[Math.round(Math.min(1, Math.max(0, v)) * 511)];
            const p = (y * w + x) * 4;
            img.data[p] = c[0];
            img.data[p + 1] = c[1];
            img.data[p + 2] = c[2];
            img.data[p + 3] = 255;
        }
    }
    ctx.putImageData(img, 0, 0);
}

function drawTicks(canvas) {
    const w = canvas.width = canvas.clientWidth;
    const h = canvas.height = canvas.clientHeight;
    const ctx = canvas.getContext("2d");
    const kind = canvas.dataset.kind;
    ctx.fillStyle = kind === "db" ? "#000" : "#e0e0e0";

    if (kind === "hz") {
        for (let f = 0; f <= MAX_HZ; f += 2000) {
            const y = Math.min(h - 1, Math.round(h - f / MAX_HZ * h) - 1);
            ctx.fillRect(0, y, f % 10000 ? 1 : 3, 1);
        }
    } else if (kind === "time") {
        for (let t = 0; t <= DURATION; t += 10) {
            ctx.fillRect(Math.round(t / DURATION * w), 0, 1, t % 20 ? 2 : 4);
        }
    } else {
        const step = w / 72.5;
        for (let i = 0; i <= 72 * 6; i++) {
            ctx.fillRect(Math.round(i / 6 * step), 0, 1, i % 6 ? 2 : 4);
        }
    }
}

const dbLabels = document.getElementById("db-labels");
for (let db = -71; db <= 0; db++) {
    const li = document.createElement("li");
    li.textContent = db;
    dbLabels.appendChild(li);
}

function draw() {
    document.querySelectorAll(".spectro").forEach(drawSpectrogram);
    document.querySelectorAll(".ticks").forEach(drawTicks);
}

draw();
window.addEventListener("resize", draw);
```
